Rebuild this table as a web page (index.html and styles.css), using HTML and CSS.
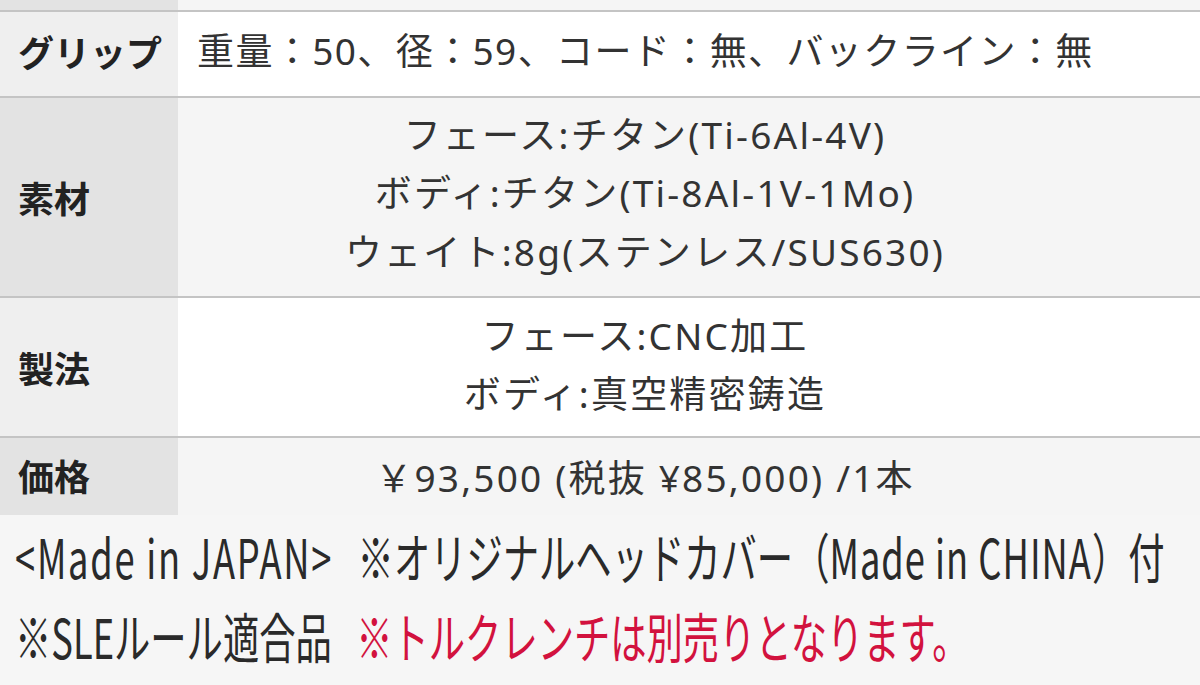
FILE: index.html
```html
<!DOCTYPE html>
<html lang="ja">
<head>
<meta charset="utf-8">
<link rel="stylesheet" href="styles.css">
</head>
<body>
<div class="page">
  <div class="spec">
    <div class="row top">
      <div class="label"></div>
      <div class="value split"><span class="cellA"></span><span class="cellB"></span></div>
    </div>
    <div class="row odd grip">
      <div class="label">グリップ</div>
      <div class="value left">重量：50、径：59、コード：無、バックライン：無</div>
    </div>
    <div class="row even mat">
      <div class="label">素材</div>
      <div class="value center">
        <div>フェース:チタン(Ti-6Al-4V)</div>
        <div>ボディ:チタン(Ti-8Al-1V-1Mo)</div>
        <div>ウェイト:8g(ステンレス/SUS630)</div>
      </div>
    </div>
    <div class="row odd make">
      <div class="label">製法</div>
      <div class="value center">
        <div>フェース:CNC加工</div>
        <div>ボディ:真空精密鋳造</div>
      </div>
    </div>
    <div class="row even price">
      <div class="label">価格</div>
      <div class="value center">￥93,500 (税抜 ¥85,000) /1本</div>
    </div>
  </div>
  <div class="notes">
    <div class="note"><span class="tall"><span class="lat">&lt;Made in JAPAN&gt;</span>&nbsp;&nbsp;&nbsp;※オリジナルヘッドカバー（<span class="lat2">Made in CHINA</span>）付</span></div>
    <div class="note"><span class="tall">※SLEルール適合品&nbsp;&nbsp;&nbsp;<span class="red">※トルクレンチは別売りとなります。</span></span></div>
  </div>
</div>
</body>
</html>
```
FILE: styles.css
```css
* { box-sizing: border-box; }
html, body { margin: 0; padding: 0; }
body {
  width: 1200px;
  height: 685px;
  overflow: hidden;
  background: #f6f6f6;
  font-family: "Noto Sans CJK JP", "Noto Sans", sans-serif;
  color: #333;
}
.page { width: 1200px; }
.spec { width: 1200px; }
.row {
  display: grid;
  grid-template-columns: 178px 1fr;
  border-top: 2px solid #c4c4c4;
}
.row.top { border-top: none; height: 10px; }
.row.top .label { background: #e3e3e3; }
.split { display: flex; background: #f5f5f5; }
.cellA { width: 302px; border-right: 1px solid #c8c8c8; }
.cellB { flex: 1; }
.label {
  font-weight: 700;
  font-size: 36px;
  line-height: 58px;
  padding-left: 18px;
  display: flex;
  align-items: center;
  color: #222;
}
.value {
  font-family: "Noto Sans", "Noto Sans CJK JP", sans-serif;
  font-size: 37px;
  font-weight: 400;
  letter-spacing: 2.2px;
  line-height: 58.5px;
  display: flex;
  flex-direction: column;
  justify-content: center;
  color: #333;
}
.odd .label { background: #efefef; }
.odd .value { background: #ffffff; }
.even .label { background: #e3e3e3; }
.even .value { background: #f5f5f5; }
.value.left { padding-left: 19px; letter-spacing: 1.4px; }
.value.center { text-align: center; padding-left: 18px; padding-right: 106px; }
.grip .label { padding-bottom: 6px; }
.grip .value { padding-bottom: 6px; }
.mat .value { padding-bottom: 7px; }
.make .value { padding-bottom: 4px; }
.grip .value, .grip .label { height: 84px; }
.mat .value, .mat .label { height: 198px; }
.make .value, .make .label { height: 138px; }
.price .value, .price .label { height: 77px; }
.price .label { align-items: flex-start; padding-top: 8px; }
.price .value { justify-content: flex-start; padding-top: 11px; }
.notes {
  background: #f6f6f6;
  height: 170px;
  padding-top: 0;
  padding-left: 15px;
}
.note {
  height: 80px;
  font-size: 36.3px;
  line-height: 80px;
  color: #2a2a2a;
  white-space: nowrap;
}
.tall {
  display: inline-block;
  transform: scaleY(1.488);
  transform-origin: left center;
}
.lat { letter-spacing: 1.75px; }
.lat2 { letter-spacing: 1px; }
.red { color: #d2123e; }
```
